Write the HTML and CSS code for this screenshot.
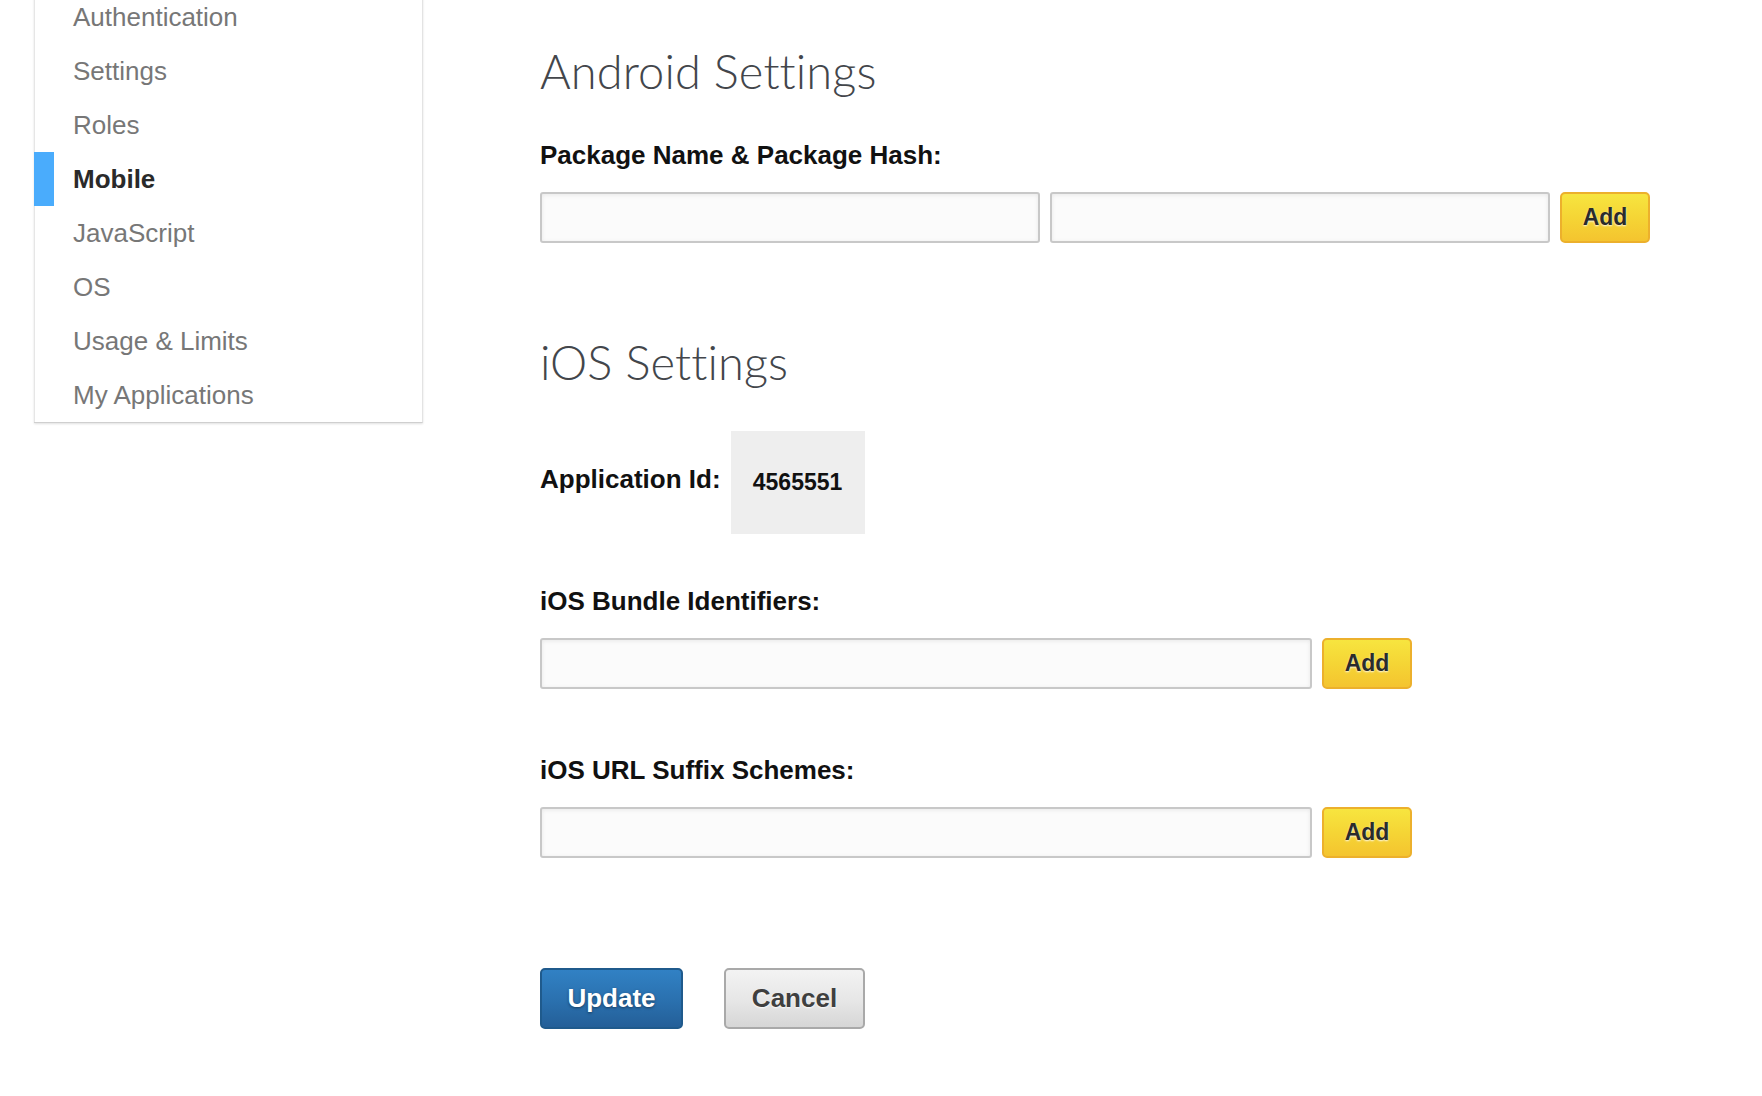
FILE: index.html
```html
<!DOCTYPE html>
<html lang="en">
<head>
<meta charset="utf-8">
<title>Mobile Settings</title>
<link rel="stylesheet" href="styles.css">
</head>
<body>
<div class="page">
  <nav class="sidebar">
    <ul class="nav">
      <li class="nav-item">Authentication</li>
      <li class="nav-item">Settings</li>
      <li class="nav-item">Roles</li>
      <li class="nav-item active">Mobile</li>
      <li class="nav-item">JavaScript</li>
      <li class="nav-item">OS</li>
      <li class="nav-item">Usage &amp; Limits</li>
      <li class="nav-item">My Applications</li>
    </ul>
  </nav>
  <main class="content">
    <section class="section">
      <h2 class="heading">Android Settings</h2>
      <label class="field-label">Package Name &amp; Package Hash:</label>
      <div class="input-row">
        <input class="text-input half" type="text">
        <input class="text-input half" type="text">
        <button class="btn-add" type="button">Add</button>
      </div>
    </section>
    <section class="section ios">
      <h2 class="heading">iOS Settings</h2>
      <div class="app-id-row">
        <span class="field-label inline">Application Id:</span>
        <span class="app-id">4565551</span>
      </div>
      <label class="field-label after-id">iOS Bundle Identifiers:</label>
      <div class="input-row">
        <input class="text-input wide" type="text">
        <button class="btn-add" type="button">Add</button>
      </div>
      <label class="field-label after-input">iOS URL Suffix Schemes:</label>
      <div class="input-row">
        <input class="text-input wide" type="text">
        <button class="btn-add" type="button">Add</button>
      </div>
    </section>
    <div class="actions">
      <button class="btn-primary" type="button">Update</button>
      <button class="btn-cancel" type="button">Cancel</button>
    </div>
  </main>
</div>
</body>
</html>
```
FILE: styles.css
```css
html, body {
  margin: 0;
  padding: 0;
  background: #ffffff;
}

body {
  font-family: "Liberation Sans", Arial, Helvetica, sans-serif;
  color: #111;
  overflow: hidden;
}

.page {
  display: flex;
  align-items: flex-start;
}

/* Sidebar */
.sidebar {
  margin-left: 34px;
  margin-top: -10px;
  width: 389px;
  box-sizing: border-box;
  background: #fff;
  border-right: 1px solid #e3e3e3;
  border-bottom: 1px solid #cfcfcf;
  box-shadow: 0 1px 2px rgba(0, 0, 0, 0.12);
}

.nav {
  list-style: none;
  margin: 0;
  padding: 0;
}

.nav-item {
  height: 54px;
  line-height: 54px;
  font-size: 26px;
  color: #777777;
  border-left: 1px solid #e6e6e6;
  padding-left: 38px;
  white-space: nowrap;
}

.nav-item.active {
  border-left: 20px solid #4aacfc;
  padding-left: 19px;
  color: #2a2a2a;
  font-weight: bold;
}

/* Content */
.content {
  margin-left: 117px;
  padding-top: 43px;
  display: flex;
  flex-direction: column;
}

.section {
  display: flex;
  flex-direction: column;
  align-items: flex-start;
}

.section.ios {
  margin-top: 91px;
}

.heading {
  margin: 0;
  font-family: "Lato", "Open Sans", sans-serif;
  font-weight: 300;
  font-size: 47px;
  line-height: 56px;
  color: #43464b;
  letter-spacing: 0.1px;
}

.field-label {
  display: block;
  margin-top: 41px;
  font-size: 26px;
  line-height: 30px;
  font-weight: bold;
  color: #111;
}

.field-label.inline {
  margin-top: 0;
  margin-bottom: 8px;
  display: inline-block;
}

.field-label.after-id {
  margin-top: 52px;
}

.field-label.after-input {
  margin-top: 66px;
}

.input-row {
  display: flex;
  gap: 10px;
  margin-top: 22px;
  align-items: stretch;
}

.text-input {
  box-sizing: border-box;
  height: 51px;
  margin: 0;
  padding: 0 10px;
  border: 2px solid #c8c8c8;
  border-radius: 3px;
  background: #fbfbfb;
  box-shadow: inset 0 1px 4px rgba(0, 0, 0, 0.08);
  font-family: inherit;
  font-size: 22px;
  outline: none;
}

.text-input.half {
  width: 500px;
}

.text-input.wide {
  width: 772px;
}

.btn-add {
  box-sizing: border-box;
  width: 90px;
  height: 51px;
  margin: 0;
  padding: 0;
  border: 2px solid #ecb02c;
  border-radius: 5px;
  background: linear-gradient(to bottom, #f7e53f 0%, #f5d535 50%, #f4c42f 100%);
  font-family: inherit;
  font-size: 23px;
  font-weight: bold;
  color: #2b2b2b;
  text-shadow: 0 1px 2px rgba(255, 255, 255, 0.9);
  cursor: pointer;
}

.app-id-row {
  display: flex;
  align-items: center;
  gap: 10px;
  margin-top: 41px;
}

.app-id {
  box-sizing: border-box;
  width: 134px;
  height: 103px;
  display: flex;
  align-items: center;
  justify-content: center;
  background: #eeeeee;
  font-size: 23px;
  font-weight: bold;
  color: #111;
}

.actions {
  display: flex;
  gap: 41px;
  margin-top: 110px;
}

.btn-primary,
.btn-cancel {
  box-sizing: border-box;
  height: 61px;
  margin: 0;
  border-radius: 5px;
  font-family: inherit;
  font-size: 26px;
  font-weight: bold;
  cursor: pointer;
}

.btn-primary {
  width: 143px;
  border: 2px solid #1f5a8c;
  background: linear-gradient(to bottom, #3181c4 0%, #2a70ae 55%, #245f98 100%);
  color: #ffffff;
  text-shadow: 0 1px 3px rgba(0, 0, 0, 0.45);
}

.btn-cancel {
  width: 141px;
  border: 2px solid #a9a9a9;
  background: linear-gradient(to bottom, #f3f3f3 0%, #e6e6e6 55%, #d6d6d6 100%);
  color: #3f3f3f;
  text-shadow: 0 1px 2px rgba(255, 255, 255, 0.9);
}
```
